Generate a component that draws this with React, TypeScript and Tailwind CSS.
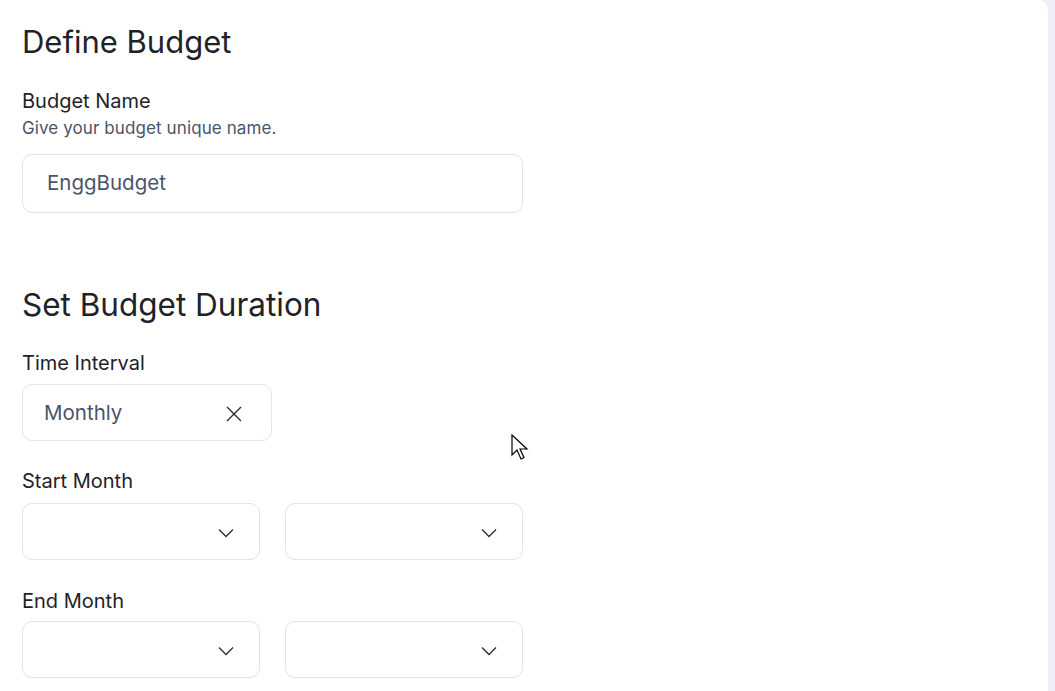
import React from "react";

const Chevron = () => (
  <svg width="16" height="10" viewBox="0 0 16 10" fill="none">
    <path d="M1 1.5l7 7 7-7" stroke="#2d2d2d" strokeWidth="1.3" />
  </svg>
);

const Select = () => (
  <div className="flex h-[57px] w-[238px] items-center justify-end rounded-[10px] border border-[#e3e3e6] bg-white pr-[25px] pt-[3px]">
    <Chevron />
  </div>
);

export default function App() {
  return (
    <div
      className="flex h-[691px] w-full bg-[#eef0f5] text-[#1f2328]"
      style={{ fontFamily: "Inter, 'Noto Sans', sans-serif" }}
    >
      <div className="relative flex-1 overflow-hidden rounded-tr-[10px] bg-white pl-[22px] pt-[22px]">
        <h1 className="text-[31px] leading-[40px] text-[#1f2328]">
          Define Budget
        </h1>
        <div className="mt-[27px] text-[20px] leading-[24px]">
          Budget Name
        </div>
        <div className="mt-[5px] text-[17px] leading-[20px] tracking-[0.1px] text-[#4a5569]">
          Give your budget unique name.
        </div>
        <div className="mt-[16px] flex h-[59px] w-[501px] items-center rounded-[10px] border border-[#e3e3e6] pl-[24px] text-[20.5px] text-[#4a5569]">
          EnggBudget
        </div>

        <h2 className="mt-[72px] text-[31.5px] leading-[40px]">
          Set Budget Duration
        </h2>
        <div className="mt-[26px] text-[20px] leading-[24px]">
          Time Interval
        </div>
        <div className="mt-[9px] flex h-[57px] w-[250px] items-center justify-between rounded-[10px] border border-[#e3e3e6] pl-[21px] pr-[29px] pt-[2px] text-[20.5px] text-[#4a5569]">
          <span>Monthly</span>
          <svg width="16" height="16" viewBox="0 0 16 16" fill="none">
            <path d="M1 1l14 14M15 1L1 15" stroke="#2d2d2d" strokeWidth="1.4" />
          </svg>
        </div>

        <div className="mt-[28px] text-[20px] leading-[24px]">
          Start Month
        </div>
        <div className="mt-[10px] flex gap-[25px]">
          <Select />
          <Select />
        </div>

        <div className="mt-[29px] text-[20px] leading-[24px]">
          End Month
        </div>
        <div className="mt-[8px] flex gap-[25px]">
          <Select />
          <Select />
        </div>

        <svg
          className="absolute left-[511px] top-[434px]"
          width="19"
          height="27"
          viewBox="0 0 19 27"
        >
          <path
            d="M1 1v20l5-5 4 9 3-1.5-4-8.5h7z"
            fill="white"
            stroke="black"
            strokeWidth="1.2"
            strokeLinejoin="miter"
          />
        </svg>
      </div>
      <div className="w-[7px]" />
    </div>
  );
}
